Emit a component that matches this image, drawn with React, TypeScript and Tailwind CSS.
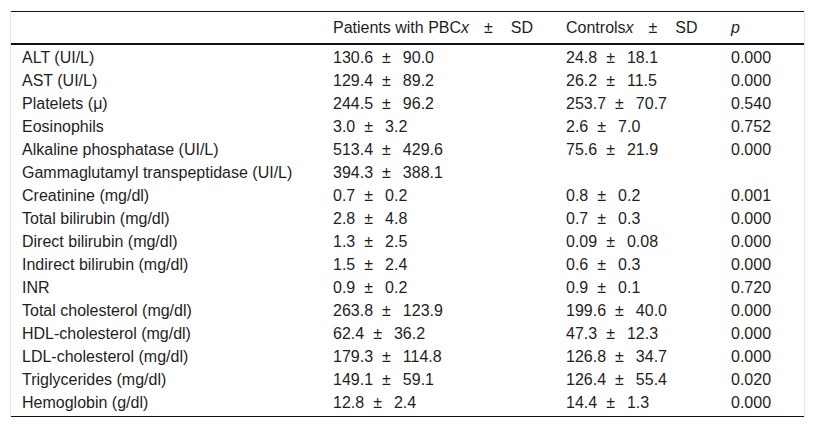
import React from "react";

type Row = { label: string; p?: [string, string]; c?: [string, string]; pv?: string };

const rows: Row[] = [
  { label: "ALT (UI/L)", p: ["130.6", "90.0"], c: ["24.8", "18.1"], pv: "0.000" },
  { label: "AST (UI/L)", p: ["129.4", "89.2"], c: ["26.2", "11.5"], pv: "0.000" },
  { label: "Platelets (\u03bc)", p: ["244.5", "96.2"], c: ["253.7", "70.7"], pv: "0.540" },
  { label: "Eosinophils", p: ["3.0", "3.2"], c: ["2.6", "7.0"], pv: "0.752" },
  { label: "Alkaline phosphatase (UI/L)", p: ["513.4", "429.6"], c: ["75.6", "21.9"], pv: "0.000" },
  { label: "Gammaglutamyl transpeptidase (UI/L)", p: ["394.3", "388.1"] },
  { label: "Creatinine (mg/dl)", p: ["0.7", "0.2"], c: ["0.8", "0.2"], pv: "0.001" },
  { label: "Total bilirubin (mg/dl)", p: ["2.8", "4.8"], c: ["0.7", "0.3"], pv: "0.000" },
  { label: "Direct bilirubin (mg/dl)", p: ["1.3", "2.5"], c: ["0.09", "0.08"], pv: "0.000" },
  { label: "Indirect bilirubin (mg/dl)", p: ["1.5", "2.4"], c: ["0.6", "0.3"], pv: "0.000" },
  { label: "INR", p: ["0.9", "0.2"], c: ["0.9", "0.1"], pv: "0.720" },
  { label: "Total cholesterol (mg/dl)", p: ["263.8", "123.9"], c: ["199.6", "40.0"], pv: "0.000" },
  { label: "HDL-cholesterol (mg/dl)", p: ["62.4", "36.2"], c: ["47.3", "12.3"], pv: "0.000" },
  { label: "LDL-cholesterol (mg/dl)", p: ["179.3", "114.8"], c: ["126.8", "34.7"], pv: "0.000" },
  { label: "Triglycerides (mg/dl)", p: ["149.1", "59.1"], c: ["126.4", "55.4"], pv: "0.020" },
  { label: "Hemoglobin (g/dl)", p: ["12.8", "2.4"], c: ["14.4", "1.3"], pv: "0.000" },
];

function MeanSd({ v }: { v?: [string, string] }) {
  if (!v) return null;
  return (
    <span className="whitespace-nowrap">
      <span>{v[0]}</span>
      <span className="ml-[9px]">±</span>
      <span className="ml-[12px]">{v[1]}</span>
    </span>
  );
}

const grid = "grid grid-cols-[311px_233px_165px_1fr]";

export default function App() {
  return (
    <div
      className="bg-white w-[815px] h-[430px] pt-[11px] px-[10px] text-[#1e1e1e] text-[16px] leading-[18px]"
      style={{ fontFamily: '"Liberation Sans", Arial, sans-serif' }}
    >
      <div className="border-x border-[#e4e4e4]">
        <div className="border-t border-b border-[#111]">
          <div className={`${grid} border-b-2 border-[#111] h-[33px] items-center`}>
            <div className="pl-[11px]"></div>
            <div className="pl-[11px] whitespace-nowrap">
              Patients with PBC<i>x</i>
              <span className="ml-[15px]">±</span>
              <span className="ml-[18px]">SD</span>
            </div>
            <div className="pl-[11px] whitespace-nowrap">
              Controls<i>x</i>
              <span className="ml-[15px]">±</span>
              <span className="ml-[18px]">SD</span>
            </div>
            <div className="pl-[11px]">
              <i>p</i>
            </div>
          </div>
          <div className="pt-[1px] pb-[2px]">
            {rows.map((r) => (
              <div key={r.label} className={`${grid} h-[23px] items-center`}>
                <div className="pl-[11px] whitespace-nowrap">{r.label}</div>
                <div className="pl-[11px]">
                  <MeanSd v={r.p} />
                </div>
                <div className="pl-[11px]">
                  <MeanSd v={r.c} />
                </div>
                <div className="pl-[11px]">{r.pv}</div>
              </div>
            ))}
          </div>
        </div>
      </div>
    </div>
  );
}
